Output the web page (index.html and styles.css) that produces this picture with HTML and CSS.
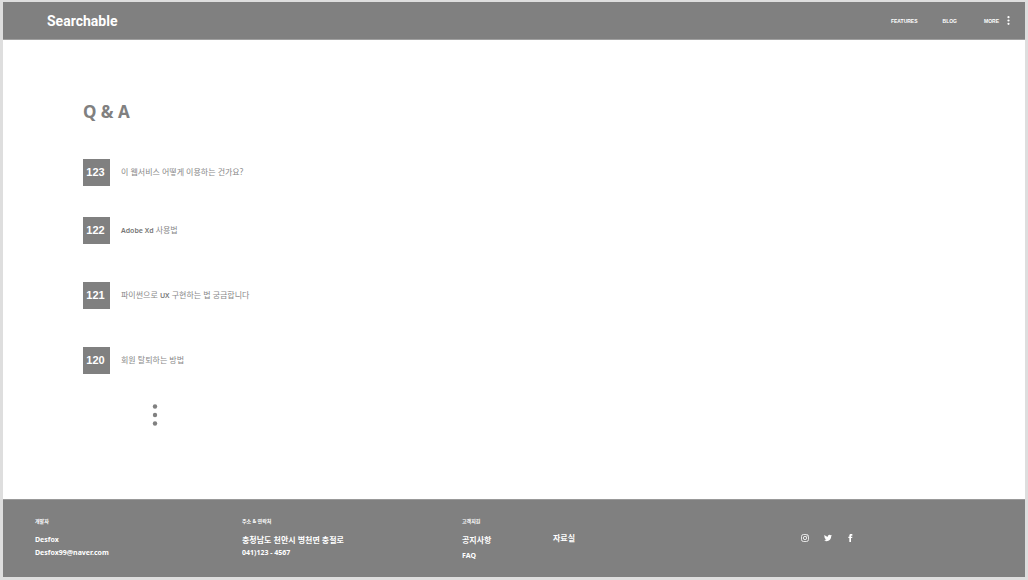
FILE: index.html
```html
<!DOCTYPE html>
<html lang="ko">
<head>
<meta charset="utf-8">
<title>Searchable</title>
<meta name="viewport" content="width=device-width, initial-scale=1">
<link rel="stylesheet" href="styles.css">
</head>
<body>
<header class="topbar">
  <a class="brand" href="#">Searchable</a>
  <nav class="nav">
    <a href="#">FEATURES</a>
    <a href="#">BLOG</a>
    <button class="more" type="button">MORE
      <svg width="3" height="9" viewBox="0 0 3 9" fill="currentColor" aria-hidden="true"><circle cx="1.5" cy="1.2" r="1.1"/><circle cx="1.5" cy="4.5" r="1.1"/><circle cx="1.5" cy="7.8" r="1.1"/></svg>
    </button>
  </nav>
</header>
<main class="content">
  <h1 class="title">Q &amp; A</h1>
  <ul class="questions">
    <li class="question latest"><span class="number">123</span><a href="#">이 웹서비스 어떻게 이용하는 건가요?</a></li>
    <li class="question"><span class="number">122</span><a href="#"><span class="latin">Adobe Xd</span> 사용법</a></li>
    <li class="question"><span class="number">121</span><a href="#">파이썬으로 <span class="latin">UX</span> 구현하는 법 궁금합니다</a></li>
    <li class="question"><span class="number">120</span><a href="#">회원 탈퇴하는 방법</a></li>
  </ul>
  <button class="load" type="button" aria-label="더 보기">
    <svg width="6" height="22" viewBox="0 0 6 22" fill="currentColor" aria-hidden="true"><circle cx="3" cy="2.5" r="2.2"/><circle cx="3" cy="11" r="2.2"/><circle cx="3" cy="19.5" r="2.2"/></svg>
  </button>
</main>
<footer class="footer">
  <section>
    <h2>개발자</h2>
    <p>Desfox</p>
    <p><a href="mailto:Desfox99@naver.com">Desfox99@naver.com</a></p>
  </section>
  <section>
    <h2>주소 &amp; 연락처</h2>
    <p class="korean">충청남도 천안시 병천면 충절로</p>
    <p>041)123 - 4567</p>
  </section>
  <section class="support">
    <h2>고객지원</h2>
    <a class="korean" href="#">공지사항</a>
    <a href="#">FAQ</a>
  </section>
  <a class="library korean" href="#">자료실</a>
  <div class="social">
    <a href="#" aria-label="Instagram"><svg width="8" height="8" viewBox="0 0 16 16" fill="none" stroke="currentColor" stroke-width="1.6"><rect x="1" y="1" width="14" height="14" rx="4"/><circle cx="8" cy="8" r="3.3"/><circle cx="12" cy="4" r=".5"/></svg></a>
    <a href="#" aria-label="Twitter"><svg width="8" height="8" viewBox="0 0 24 24" fill="currentColor"><path d="M24 4.6a10 10 0 0 1-2.8.8 5 5 0 0 0 2.2-2.7 10 10 0 0 1-3.1 1.2 4.9 4.9 0 0 0-8.4 4.5A14 14 0 0 1 1.7 3.2a4.9 4.9 0 0 0 1.5 6.5 5 5 0 0 1-2.2-.6v.1a4.9 4.9 0 0 0 3.9 4.8 5 5 0 0 1-2.2.1 4.9 4.9 0 0 0 4.6 3.4A9.9 9.9 0 0 1 0 19.5 14 14 0 0 0 7.5 21.7c9.1 0 14.3-7.7 14-14.6A10 10 0 0 0 24 4.6z"/></svg></a>
    <a href="#" aria-label="Facebook"><svg width="8" height="8" viewBox="0 0 24 24" fill="currentColor"><path d="M7 8H4v4h3v12h5V12h3.6l.4-4h-4V6.300c0-1 .2-1.300 1.100-1.300H16V0h-3.800C8.600 0 7 1.600 7 4.600z"/></svg></a>
  </div>
</footer>
</body>
</html>
```
FILE: styles.css
```css
* {
  box-sizing: border-box;
}

body {
  margin: 0;
  min-height: 100vh;
  padding: 2px 3px 3px;
  display: flex;
  flex-direction: column;
  background: #dedede;
  color: #808080;
  font: 8px/13px "Noto Sans", "Noto Sans CJK KR", sans-serif;
}

h1, h2, p, ul {
  margin: 0;
  padding: 0;
}

a {
  color: inherit;
  text-decoration: none;
}

button {
  padding: 0;
  border: 0;
  background: none;
  color: inherit;
  font: inherit;
  cursor: pointer;
}

svg {
  display: block;
}

.topbar {
  display: flex;
  align-items: center;
  justify-content: space-between;
  height: 38px;
  padding: 0 15px 0 44px;
  border-bottom: 1px solid #a0a0a0;
  background: #808080;
  color: #fff;
}

.brand {
  font: bold 14px/20px Roboto, sans-serif;
}

.nav {
  display: flex;
  align-items: center;
  gap: 25px;
  font: bold 5px/8px "Liberation Sans", sans-serif;
}

.more {
  display: flex;
  align-items: center;
  gap: 8px;
  margin-left: 2px;
}

.content {
  flex: 1;
  padding: 60px 80px;
  background: #fff;
}

.title {
  margin-bottom: 35px;
  font: bold 17px/24px "Noto Sans", sans-serif;
}

.questions {
  display: flex;
  flex-direction: column;
  gap: 38px;
  list-style: none;
}

.question {
  display: flex;
  align-items: center;
  gap: 11px;
}

.question a {
  padding-bottom: 2px;
  color: #888;
}

.latest {
  margin-bottom: -7px;
}

.number {
  width: 27px;
  padding-right: 2px;
  background: #808080;
  color: #fff;
  font: bold 11px/27px "Liberation Sans", sans-serif;
  text-align: center;
}

.latin {
  color: #777;
  font-size: 7px;
  font-weight: 600;
}

.load {
  display: block;
  margin: 30px 0 0 69px;
}

.footer {
  display: grid;
  grid-template-columns: 207fr 220fr 91fr 248fr 224fr;
  min-height: 78px;
  padding: 16px 0 8px 32px;
  border-top: 1px solid #999;
  background: #808080;
  color: #fff;
  font-size: 7px;
  font-weight: bold;
}

.footer h2 {
  margin-bottom: 7px;
  font-size: 5px;
  line-height: 10px;
}

.footer .korean {
  font-size: 8px;
}

.support {
  display: flex;
  flex-direction: column;
  gap: 3px;
}

.support h2 {
  margin-bottom: 4px;
}

.library {
  padding-top: 15px;
}

.social {
  display: flex;
  gap: 15px;
  padding-top: 18px;
}
```
